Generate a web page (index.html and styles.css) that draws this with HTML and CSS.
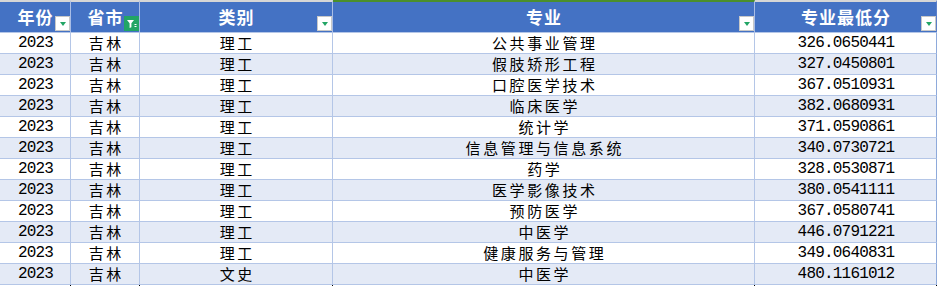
FILE: index.html
```html
<!DOCTYPE html>
<html lang="zh">
<head>
<meta charset="utf-8">
<link rel="stylesheet" href="styles.css">
</head>
<body>
<table class="sheet">
  <colgroup>
    <col class="c1"><col class="c2"><col class="c3"><col class="c4"><col class="c5">
  </colgroup>
  <thead>
    <tr>
      <th>年份<span class="fbtn"><i class="tri"></i></span></th>
      <th>省市<span class="fbtn active"><svg width="15" height="15" viewBox="0 0 15 15"><path d="M3 4 H10 L7.4 7.2 V11.2 L5.6 12 V7.2 Z" fill="#fff"/><rect x="10.5" y="8" width="2" height="1" fill="#fff"/><rect x="10.5" y="10" width="2" height="1" fill="#fff"/></svg></span></th>
      <th>类别<span class="fbtn"><i class="tri"></i></span></th>
      <th class="sel">专业<span class="fbtn"><i class="tri"></i></span></th>
      <th>专业最低分<span class="fbtn"><i class="tri"></i></span></th>
    </tr>
  </thead>
  <tbody>
    <tr><td class="num">2023</td><td class="zh">吉林</td><td class="zh">理工</td><td class="zh">公共事业管理</td><td class="num">326.0650441</td></tr>
    <tr><td class="num">2023</td><td class="zh">吉林</td><td class="zh">理工</td><td class="zh">假肢矫形工程</td><td class="num">327.0450801</td></tr>
    <tr><td class="num">2023</td><td class="zh">吉林</td><td class="zh">理工</td><td class="zh">口腔医学技术</td><td class="num">367.0510931</td></tr>
    <tr><td class="num">2023</td><td class="zh">吉林</td><td class="zh">理工</td><td class="zh">临床医学</td><td class="num">382.0680931</td></tr>
    <tr><td class="num">2023</td><td class="zh">吉林</td><td class="zh">理工</td><td class="zh">统计学</td><td class="num">371.0590861</td></tr>
    <tr><td class="num">2023</td><td class="zh">吉林</td><td class="zh">理工</td><td class="zh">信息管理与信息系统</td><td class="num">340.0730721</td></tr>
    <tr><td class="num">2023</td><td class="zh">吉林</td><td class="zh">理工</td><td class="zh">药学</td><td class="num">328.0530871</td></tr>
    <tr><td class="num">2023</td><td class="zh">吉林</td><td class="zh">理工</td><td class="zh">医学影像技术</td><td class="num">380.0541111</td></tr>
    <tr><td class="num">2023</td><td class="zh">吉林</td><td class="zh">理工</td><td class="zh">预防医学</td><td class="num">367.0580741</td></tr>
    <tr><td class="num">2023</td><td class="zh">吉林</td><td class="zh">理工</td><td class="zh">中医学</td><td class="num">446.0791221</td></tr>
    <tr><td class="num">2023</td><td class="zh">吉林</td><td class="zh">理工</td><td class="zh">健康服务与管理</td><td class="num">349.0640831</td></tr>
    <tr><td class="num">2023</td><td class="zh">吉林</td><td class="zh">文史</td><td class="zh">中医学</td><td class="num">480.1161012</td></tr>
    <tr class="tail"><td></td><td></td><td></td><td></td><td></td></tr>
  </tbody>
</table>
</body>
</html>
```

FILE: styles.css
```css
html, body {
  margin: 0;
  padding: 0;
  background: #ffffff;
}

.sheet {
  border-collapse: separate;
  border-spacing: 0;
  table-layout: fixed;
  width: 937px;
}

.c1 { width: 71px; }
.c2 { width: 69px; }
.c3 { width: 193px; }
.c4 { width: 422px; }
.c5 { width: 182px; }

.sheet th {
  position: relative;
  height: 30px;
  padding: 0 0 0 1px;
  border-top: 2px solid #d6d6d6;
  border-right: 1px solid #a9bde6;
  background: #4472c4;
  color: #ffffff;
  font-family: "Noto Sans CJK SC", "Noto Sans", sans-serif;
  font-weight: 700;
  font-size: 17px;
  line-height: 30px;
  text-align: center;
  letter-spacing: 1px;
}

.sheet th:last-child {
  border-right: 1px solid #5b7fc9;
}

.sheet th.sel {
  border-top-color: #4b8f2c;
}

.fbtn {
  position: absolute;
  right: 0;
  bottom: 1px;
  width: 13px;
  height: 13px;
  background: #ffffff;
  border: 1px solid #c8c8c8;
  display: flex;
  align-items: flex-end;
  justify-content: center;
}

.fbtn.active {
  width: 15px;
  height: 15px;
  border: none;
  background: #22a565;
  display: block;
}

.fbtn.active svg {
  display: block;
}

.tri {
  display: block;
  width: 0;
  height: 0;
  margin-bottom: 4px;
  border-left: 3.5px solid transparent;
  border-right: 3.5px solid transparent;
  border-top: 4px solid #22a565;
}

.sheet td {
  height: 20px;
  padding: 0;
  border-right: 1px solid #b4c6e7;
  border-bottom: 1px solid #b4c6e7;
  line-height: 20px;
  color: #000000;
  text-align: center;
  white-space: nowrap;
  overflow: hidden;
}

.sheet td.num {
  font-family: "Liberation Mono", "DejaVu Sans Mono", monospace;
  font-size: 16px;
  letter-spacing: -0.8px;
  padding-left: 1px;
}

.sheet td.zh {
  font-family: "Noto Sans CJK SC", "Noto Sans CJK JP", sans-serif;
  font-size: 15px;
  letter-spacing: 2.6px;
  padding-left: 2.6px;
}

.sheet tbody tr:nth-child(even) td {
  background: #e4eaf6;
}

.sheet tbody tr:first-child td {
  border-top: 1px solid #b4c6e7;
}

.sheet td:last-child {
  border-right: 1px solid #8eaadb;
}

.sheet tr.tail td {
  height: 2px;
  line-height: 2px;
  font-size: 0;
  padding: 0;
  background: #ffffff;
  border-bottom: none;
  border-right: 1px solid #000000;
}
```
